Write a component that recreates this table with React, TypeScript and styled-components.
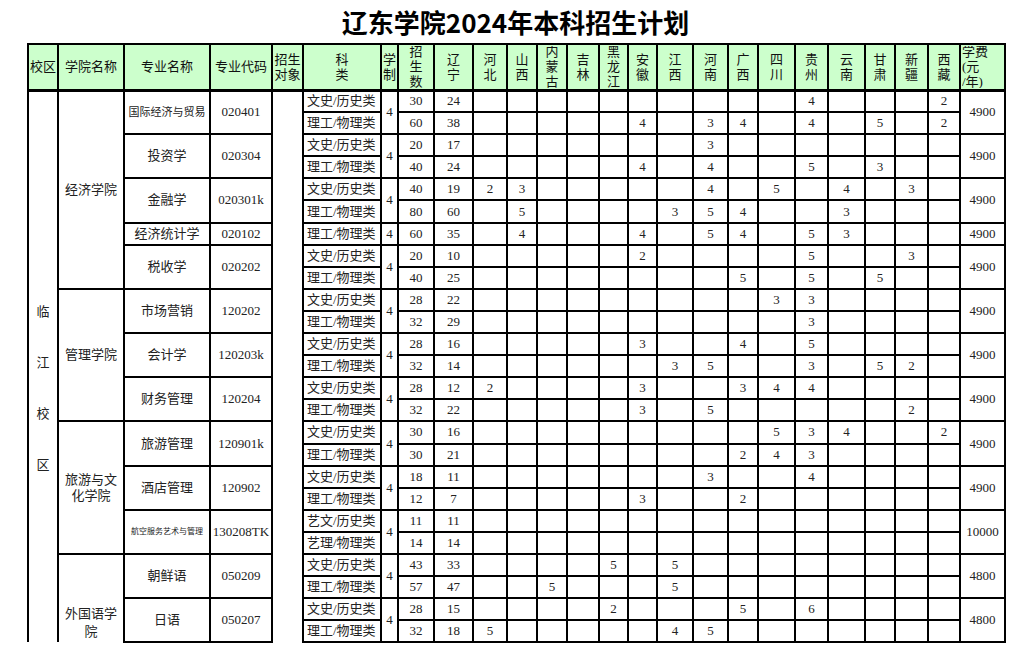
import React from "react"
import styled, { createGlobalStyle, css } from "styled-components"

const GlobalStyle = createGlobalStyle`
  html, body {
    margin: 0;
    padding: 0;
    background: #fff;
  }
  body {
    font-family: "Liberation Serif", "Noto Sans CJK SC", serif;
    color: #222;
  }
`

const Page = styled.div`
  width: 1029px;
  height: 657px;
  overflow: hidden;
  padding-left: 27px;
  box-sizing: border-box;
`

const Title = styled.h1`
  margin: 0;
  width: 977px;
  height: 43px;
  line-height: 43px;
  text-align: center;
  font-family: "Noto Sans CJK SC", "Liberation Sans", sans-serif;
  font-weight: 700;
  font-size: 26px;
  color: #000;
`

const Table = styled.table`
  border-collapse: collapse;
  table-layout: fixed;
  width: 977px;
`

const Col = styled.col<{ $w: number }>`
  width: ${(p) => p.$w}px;
`

const HeadRow = styled.tr`
  height: 46px;
`

const HeadCell = styled.th<{ $left?: boolean }>`
  border: 2px solid #000;
  border-bottom-width: 3px;
  background: #ccffcc;
  padding: ${(p) => (p.$left ? "0 0 0 1px" : "0")};
  font-weight: 400;
  font-size: 13px;
  color: #111;
  text-align: ${(p) => (p.$left ? "left" : "center")};
  vertical-align: middle;
  white-space: nowrap;
`

const HeadStack = styled.div`
  height: 42px;
  overflow: hidden;
  display: flex;
  flex-direction: column;
  justify-content: center;
  line-height: 15px;
`

const BodyRow = styled.tr`
  height: 22.1px;
`

const Cell = styled.td`
  border: 2px solid #000;
  padding: 0;
  font-size: 13px;
  line-height: 16px;
  text-align: center;
  vertical-align: middle;
  white-space: nowrap;
  overflow: hidden;
`

const CampusCell = styled(Cell)`
  vertical-align: top;
  padding-top: 194px;
  border-bottom: none;
  line-height: 51px;
`

const CollegeCell = styled(Cell)<{ $cut?: boolean }>`
  white-space: normal;
  ${(p) =>
    p.$cut &&
    css`
      vertical-align: top;
      padding-top: 50px;
      line-height: 18px;
      border-bottom: none;
    `}
`

const MajorCell = styled(Cell)<{ $size: number }>`
  font-size: ${(p) => p.$size}px;
`

const BlankCell = styled(Cell)`
  border-bottom: none;
`

const TrackCell = styled(Cell)`
  text-align: left;
  padding-left: 3px;
`

type Row = {
  track: string
  total: string
  ln: string
  q: Record<string, string>
}

type Major = {
  name: string
  code: string
  fee: string
  size?: number
  rows: Row[]
}

type College = {
  name: string[]
  cut?: boolean
  majors: Major[]
}

const PROVINCES = [
  "河北",
  "山西",
  "内蒙古",
  "吉林",
  "黑龙江",
  "安徽",
  "江西",
  "河南",
  "广西",
  "四川",
  "贵州",
  "云南",
  "甘肃",
  "新疆",
  "西藏",
]

const WIDTHS = [
  30, 66, 86, 62, 31, 78, 17, 36, 39, 34, 30, 30, 32, 29, 29, 36, 35, 30, 37,
  33, 37, 30, 33, 32, 45,
]

const HEADERS: string[][] = [
  ["校区"],
  ["学院名称"],
  ["专业名称"],
  ["专业代码"],
  ["招生", "对象"],
  ["科", "类"],
  ["学", "制"],
  ["招", "生", "数"],
  ["辽", "宁"],
  ["河", "北"],
  ["山", "西"],
  ["内", "蒙", "古"],
  ["吉", "林"],
  ["黑", "龙", "江"],
  ["安", "徽"],
  ["江", "西"],
  ["河", "南"],
  ["广", "西"],
  ["四", "川"],
  ["贵", "州"],
  ["云", "南"],
  ["甘", "肃"],
  ["新", "疆"],
  ["西", "藏"],
  ["学费", "(元", "/年)"],
]

const WEN = "文史/历史类"
const LI = "理工/物理类"

const COLLEGES: College[] = [
  {
    name: ["经济学院"],
    majors: [
      {
        name: "国际经济与贸易",
        code: "020401",
        fee: "4900",
        size: 11,
        rows: [
          { track: WEN, total: "30", ln: "24", q: { 贵州: "4", 西藏: "2" } },
          {
            track: LI,
            total: "60",
            ln: "38",
            q: { 安徽: "4", 河南: "3", 广西: "4", 贵州: "4", 甘肃: "5", 西藏: "2" },
          },
        ],
      },
      {
        name: "投资学",
        code: "020304",
        fee: "4900",
        rows: [
          { track: WEN, total: "20", ln: "17", q: { 河南: "3" } },
          { track: LI, total: "40", ln: "24", q: { 安徽: "4", 河南: "4", 贵州: "5", 甘肃: "3" } },
        ],
      },
      {
        name: "金融学",
        code: "020301k",
        fee: "4900",
        rows: [
          {
            track: WEN,
            total: "40",
            ln: "19",
            q: { 河北: "2", 山西: "3", 河南: "4", 四川: "5", 云南: "4", 新疆: "3" },
          },
          {
            track: LI,
            total: "80",
            ln: "60",
            q: { 山西: "5", 江西: "3", 河南: "5", 广西: "4", 云南: "3" },
          },
        ],
      },
      {
        name: "经济统计学",
        code: "020102",
        fee: "4900",
        rows: [
          {
            track: LI,
            total: "60",
            ln: "35",
            q: { 山西: "4", 安徽: "4", 河南: "5", 广西: "4", 贵州: "5", 云南: "3" },
          },
        ],
      },
      {
        name: "税收学",
        code: "020202",
        fee: "4900",
        rows: [
          { track: WEN, total: "20", ln: "10", q: { 安徽: "2", 贵州: "5", 新疆: "3" } },
          { track: LI, total: "40", ln: "25", q: { 广西: "5", 贵州: "5", 甘肃: "5" } },
        ],
      },
    ],
  },
  {
    name: ["管理学院"],
    majors: [
      {
        name: "市场营销",
        code: "120202",
        fee: "4900",
        rows: [
          { track: WEN, total: "28", ln: "22", q: { 四川: "3", 贵州: "3" } },
          { track: LI, total: "32", ln: "29", q: { 贵州: "3" } },
        ],
      },
      {
        name: "会计学",
        code: "120203k",
        fee: "4900",
        rows: [
          { track: WEN, total: "28", ln: "16", q: { 安徽: "3", 广西: "4", 贵州: "5" } },
          {
            track: LI,
            total: "32",
            ln: "14",
            q: { 江西: "3", 河南: "5", 贵州: "3", 甘肃: "5", 新疆: "2" },
          },
        ],
      },
      {
        name: "财务管理",
        code: "120204",
        fee: "4900",
        rows: [
          {
            track: WEN,
            total: "28",
            ln: "12",
            q: { 河北: "2", 安徽: "3", 广西: "3", 四川: "4", 贵州: "4" },
          },
          { track: LI, total: "32", ln: "22", q: { 安徽: "3", 河南: "5", 新疆: "2" } },
        ],
      },
    ],
  },
  {
    name: ["旅游与文", "化学院"],
    majors: [
      {
        name: "旅游管理",
        code: "120901k",
        fee: "4900",
        rows: [
          { track: WEN, total: "30", ln: "16", q: { 四川: "5", 贵州: "3", 云南: "4", 西藏: "2" } },
          { track: LI, total: "30", ln: "21", q: { 广西: "2", 四川: "4", 贵州: "3" } },
        ],
      },
      {
        name: "酒店管理",
        code: "120902",
        fee: "4900",
        rows: [
          { track: WEN, total: "18", ln: "11", q: { 河南: "3", 贵州: "4" } },
          { track: LI, total: "12", ln: "7", q: { 安徽: "3", 广西: "2" } },
        ],
      },
      {
        name: "航空服务艺术与管理",
        code: "130208TK",
        fee: "10000",
        size: 8,
        rows: [
          { track: "艺文/历史类", total: "11", ln: "11", q: {} },
          { track: "艺理/物理类", total: "14", ln: "14", q: {} },
        ],
      },
    ],
  },
  {
    name: ["外国语学", "院"],
    cut: true,
    majors: [
      {
        name: "朝鲜语",
        code: "050209",
        fee: "4800",
        rows: [
          { track: WEN, total: "43", ln: "33", q: { 黑龙江: "5", 江西: "5" } },
          { track: LI, total: "57", ln: "47", q: { 内蒙古: "5", 江西: "5" } },
        ],
      },
      {
        name: "日语",
        code: "050207",
        fee: "4800",
        rows: [
          { track: WEN, total: "28", ln: "15", q: { 黑龙江: "2", 广西: "5", 贵州: "6" } },
          { track: LI, total: "32", ln: "18", q: { 河北: "5", 江西: "4", 河南: "5" } },
        ],
      },
    ],
  },
]

const TOTAL_ROWS = COLLEGES.reduce(
  (n, c) => n + c.majors.reduce((m, mj) => m + mj.rows.length, 0),
  0
)

const Lines = ({ parts }: { parts: string[] }) => (
  <>
    {parts.map((p, i) => (
      <React.Fragment key={i}>
        {i > 0 && <br />}
        {p}
      </React.Fragment>
    ))}
  </>
)

const renderBody = () => {
  const out: React.ReactNode[] = []
  let first = true
  COLLEGES.forEach((college) => {
    const span = college.majors.reduce((m, mj) => m + mj.rows.length, 0)
    college.majors.forEach((major, mi) => {
      major.rows.forEach((row, ri) => {
        const rowSpan = major.rows.length
        out.push(
          <BodyRow key={`${major.code}-${ri}`}>
            {first && (
              <CampusCell rowSpan={TOTAL_ROWS}>
                {"临江校区".split("").map((c) => (
                  <div key={c}>{c}</div>
                ))}
              </CampusCell>
            )}
            {mi === 0 && ri === 0 && (
              <CollegeCell rowSpan={span} $cut={college.cut}>
                <Lines parts={college.name} />
              </CollegeCell>
            )}
            {ri === 0 && (
              <>
                <MajorCell rowSpan={rowSpan} $size={major.size ?? 13}>
                  {major.name}
                </MajorCell>
                <Cell rowSpan={rowSpan}>{major.code}</Cell>
              </>
            )}
            {first && <BlankCell rowSpan={TOTAL_ROWS} />}
            <TrackCell>{row.track}</TrackCell>
            {ri === 0 && <Cell rowSpan={rowSpan}>4</Cell>}
            <Cell>{row.total}</Cell>
            <Cell>{row.ln}</Cell>
            {PROVINCES.map((p) => (
              <Cell key={p}>{row.q[p] ?? ""}</Cell>
            ))}
            {ri === 0 && <Cell rowSpan={rowSpan}>{major.fee}</Cell>}
          </BodyRow>
        )
        first = false
      })
    })
  })
  return out
}

export default function App() {
  return (
    <>
      <GlobalStyle />
      <Page>
        <Title>辽东学院2024年本科招生计划</Title>
        <Table>
          <colgroup>
            {WIDTHS.map((w, i) => (
              <Col key={i} $w={w} />
            ))}
          </colgroup>
          <thead>
            <HeadRow>
              {HEADERS.map((h, i) => (
                <HeadCell key={i} $left={i === HEADERS.length - 1}>
                  <HeadStack>
                    <div>
                      <Lines parts={h} />
                    </div>
                  </HeadStack>
                </HeadCell>
              ))}
            </HeadRow>
          </thead>
          <tbody>{renderBody()}</tbody>
        </Table>
      </Page>
    </>
  )
}
